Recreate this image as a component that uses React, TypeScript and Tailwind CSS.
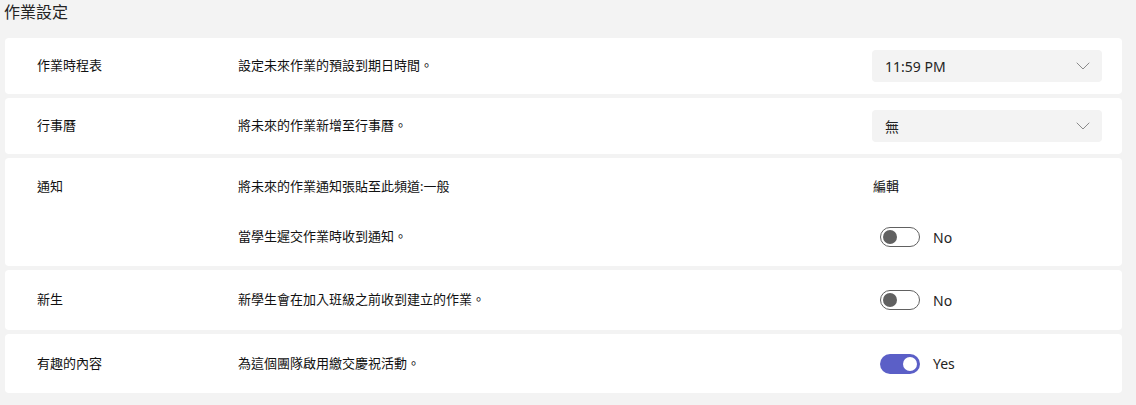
import { ChevronDown } from "lucide-react";

const font = {
  fontFamily: '"Noto Sans", "Noto Sans CJK TC", sans-serif',
};

function Select({ value }: { value: string }) {
  return (
    <div className="flex h-[32px] w-[230px] items-center justify-between rounded-[4px] bg-[#f3f3f3] pl-[13px] pr-[7px] text-[14px] text-[#242424]">
      <span>{value}</span>
      <ChevronDown className="h-[24px] w-[24px] text-[#8a8a8a]" strokeWidth={1} />
    </div>
  );
}

function Toggle({ on }: { on: boolean }) {
  return (
    <div className="flex items-center gap-[13px] pl-[8px]">
      {on ? (
        <div className="flex h-[20px] w-[40px] items-center justify-end rounded-full bg-[#5b5fc7] px-[3px]">
          <div className="h-[14px] w-[14px] rounded-full bg-white" />
        </div>
      ) : (
        <div className="flex h-[20px] w-[40px] items-center rounded-full border border-[#616161] px-[2px]">
          <div className="h-[14px] w-[14px] rounded-full bg-[#616161]" />
        </div>
      )}
      <span className="text-[14px] text-[#242424]">{on ? "Yes" : "No"}</span>
    </div>
  );
}

function Row({
  label,
  desc,
  control,
  h,
}: {
  label?: string;
  desc: string;
  control: React.ReactNode;
  h: string;
}) {
  return (
    <div className={`grid grid-cols-[201px_634px_230px] items-center ${h}`}>
      <div>{label}</div>
      <div>{desc}</div>
      <div>{control}</div>
    </div>
  );
}

export default function App() {
  return (
    <div
      className="h-[405px] w-[1136px] bg-[#f3f3f3] pl-[5px] pr-[14px] text-[13px] text-[#111111]"
      style={font}
    >
      <div className="flex h-[38px] items-start">
        <h1 className="-ml-[1px] pt-[1px] text-[16px] leading-[22px] text-[#242424]">作業設定</h1>
      </div>
      <div className="flex flex-col gap-[4px]">
        <div className="rounded-[4px] bg-white pl-[32px]">
          <Row h="h-[56px]" label="作業時程表" desc="設定未來作業的預設到期日時間。" control={<Select value="11:59 PM" />} />
        </div>
        <div className="rounded-[4px] bg-white pl-[32px]">
          <Row h="h-[56px]" label="行事曆" desc="將未來的作業新增至行事曆。" control={<Select value="無" />} />
        </div>
        <div className="flex h-[108px] flex-col justify-center rounded-[4px] bg-white pl-[32px]">
          <Row h="h-[50px]" label="通知" desc="將未來的作業通知張貼至此頻道:一般" control={<span className="pl-[1px]">編輯</span>} />
          <Row h="h-[50px]" desc="當學生遲交作業時收到通知。" control={<Toggle on={false} />} />
        </div>
        <div className="rounded-[4px] bg-white pl-[32px]">
          <Row h="h-[60px]" label="新生" desc="新學生會在加入班級之前收到建立的作業。" control={<Toggle on={false} />} />
        </div>
        <div className="rounded-[4px] bg-white pl-[32px]">
          <Row h="h-[59px]" label="有趣的內容" desc="為這個團隊啟用繳交慶祝活動。" control={<Toggle on={true} />} />
        </div>
      </div>
    </div>
  );
}
